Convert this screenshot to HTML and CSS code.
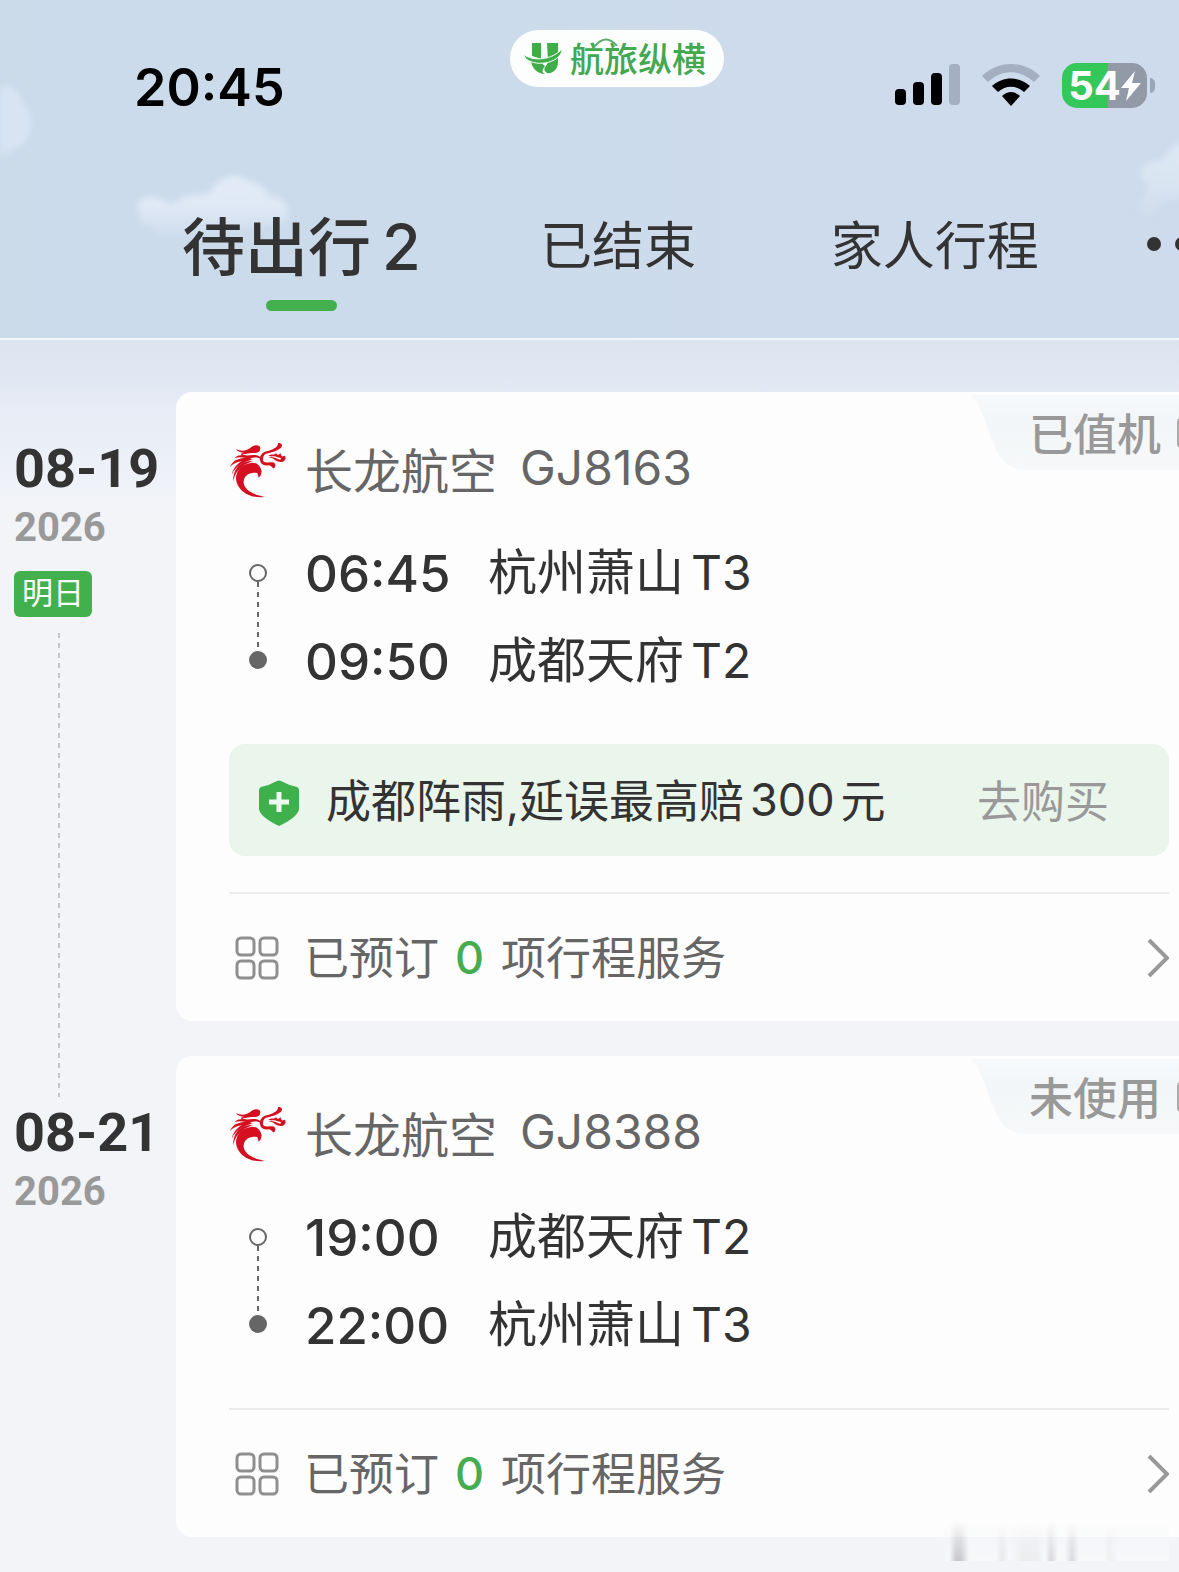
FILE: index.html
```html
<!DOCTYPE html>
<html lang="zh-CN">
<head>
<meta charset="utf-8">
<meta name="viewport" content="width=device-width, initial-scale=1">
<title>航旅纵横 行程</title>
<link rel="stylesheet" href="styles.css">
</head>
<body>
<svg class="sprite" width="0" height="0" aria-hidden="true">
  <symbol id="dragon" viewBox="28 36 172 168">
    <path d="M96 98C66 101 48 121 48 146C50 180 88 207 134 201C100 194 72 180 71 157C70 138 88 124 112 129L116 143C122 138 126 130 124 120C120 106 109 98 96 98Z"/>
    <path d="M98 93C67 92 38 112 40 154C44 129 59 108 98 93Z"/>
    <path d="M88 84C60 82 38 89 30 111C44 96 57 96 65 93C50 103 39 116 35 135C46 108 70 98 98 88Z"/>
    <path d="M47 58C67 65 78 62 91 54C103 42 122 44 121 56C119 69 108 69 96 69C83 69 78 73 66 73C76 78 88 76 98 75C111 75 123 78 122 88C117 80 100 82 92 84C79 87 63 77 45 84C50 76 60 76 66 76C59 73 65 68 73 68C62 68 53 65 47 58Z"/>
    <path d="M174 39C184 38 189 45 184 52C178 59 160 67 148 69C136 70 130 75 129 85C127 96 134 99 149 97C163 95 170 101 164 113C158 120 156 106 146 106C129 109 118 99 120 84C122 69 134 64 147 62C160 58 176 50 174 39Z"/>
    <path d="M145 76C155 72 162 76 169 69C170 77 177 75 181 69C184 76 184 80 190 79C196 72 200 86 193 92C184 101 169 94 161 87C156 83 150 84 145 82C153 80 158 81 164 83L176 88C182 91 185 86 181 83C172 82 166 77 158 79C153 80 149 79 145 76Z"/>
  </symbol>
  <symbol id="services" viewBox="0 0 44 44">
    <g fill="none" stroke="#8f8f8f" stroke-width="3"><rect x="2" y="2" width="17" height="17" rx="4"/><rect x="25" y="2" width="17" height="17" rx="4"/><rect x="2" y="25" width="17" height="17" rx="4"/><rect x="25" y="25" width="17" height="17" rx="4"/></g>
  </symbol>
  <symbol id="chevron" viewBox="0 0 22 38"><path d="M2 1L20 19L2 37" fill="none" stroke="#999" stroke-width="4"/></symbol>
  <symbol id="tag" viewBox="0 0 210 75" preserveAspectRatio="none">
    <path d="M1 0C9 5 12 15 21 40C29 61 36 75 58 75H210V0Z" fill="url(#tagfill)"/>
  </symbol>
  <linearGradient id="tagfill" x1="0" y1="0" x2="0" y2="1"><stop offset="0" stop-color="#f7f9fb"/><stop offset=".3" stop-color="#f3f6f8"/><stop offset="1" stop-color="#f6f8f9"/></linearGradient>
</svg>

<header class="header">
  <svg class="cloud cloud-edge" width="42" height="90" viewBox="0 0 42 90" aria-hidden="true"><path d="M0 8C12 5 21 14 23 26C32 32 34 44 29 54C26 70 12 72 0 78Z" fill="#d8e4f2"/></svg>
  <svg class="cloud cloud-main" width="170" height="80" viewBox="0 0 170 80" aria-hidden="true"><path d="M6 40C-2 26 12 20 22 24C32 24 30 32 42 29C49 17 65 23 75 19C82 7 98-4 112 6C126 9 132 16 136 23C152 22 158 36 151 48L110 55L55 60C39 72 20 62 20 52C8 53 3 47 6 40Z" fill="url(#cloudfill)"/><linearGradient id="cloudfill" x1="0" y1="0" x2="0" y2="1"><stop offset="0" stop-color="#e3ecf8"/><stop offset=".5" stop-color="#dfe8f5"/><stop offset="1" stop-color="#ccdbeb"/></linearGradient></svg>
  <svg class="cloud cloud-right" width="50" height="110" viewBox="0 0 50 110" aria-hidden="true"><path d="M50 12C36 14 33 26 25 31C10 30 0 43 9 50C18 54 10 66 5 73C-3 90 18 92 24 76C34 68 43 70 50 68Z" fill="url(#rightfill)"/><linearGradient id="rightfill" x1="0" y1="0" x2="0" y2="1"><stop offset="0" stop-color="#dde8f4"/><stop offset=".5" stop-color="#dae5f2"/><stop offset="1" stop-color="#cfdcec"/></linearGradient></svg>

  <div class="status">
    <time class="clock">20:45</time>
    <div class="brand">
      <svg width="40" height="34" viewBox="0 0 40 34" fill="#3fae49" aria-hidden="true"><path d="M9 1H18V17Q18 22 22 24Q17 30 22 32C14 32 8 25 8 18L19 17L9 14Z"/><path d="M24 1H35V20C35 27 30 32 24 31C18 27 24 24 25 20Z"/><path d="M0 12C10 20 29 18 39 7C39 20 15 26 3 17Z" stroke="#fcfefd" stroke-width="1"/></svg>
      <span class="brand-name">航旅纵横</span>
      <svg class="brand-arc" width="24" height="8" viewBox="0 0 24 8" aria-hidden="true"><path d="M1 8Q12-5 23 8" fill="none" stroke="#5aab6a" stroke-width="2"/></svg>
    </div>
    <div class="indicators">
      <svg width="65" height="42" viewBox="0 0 65 42" aria-label="信号"><rect y="25" width="11" height="16" rx="4"/><rect x="18" y="18" width="11" height="23" rx="4"/><rect x="36" y="9" width="11" height="32" rx="4"/><rect x="54" width="11" height="41" rx="4" fill="#a4b0c2"/></svg>
      <svg width="58" height="42" viewBox="0 0 58 42" aria-label="无线网络"><path d="M0 12C16-4 42-4 58 12L52 18C38 5 20 5 6 18Z" fill="#a4b0c2"/><path d="M10 22C21 12 37 12 48 22L42 28C34 21 24 21 16 28Z"/><path d="M20 32Q29 24 38 32L29 42Z"/></svg>
      <div class="battery"><span>54</span><svg width="20" height="30" viewBox="0 0 20 30" aria-hidden="true"><path d="M14 0L0 17H8L5 30L20 12H11Z" fill="#fff"/></svg></div>
    </div>
  </div>

  <nav class="tabs">
    <button class="tab active" type="button">待出行<span class="count">2</span></button>
    <button class="tab" type="button">已结束</button>
    <button class="tab" type="button">家人行程</button>
    <button class="more" type="button" aria-label="更多"><i></i><i></i><i></i></button>
  </nav>
</header>

<main class="trips">
  <section class="trip">
    <div class="date">
      <strong>08-19</strong><span class="year">2026</span><span class="badge">明日</span><span class="dash"></span>
    </div>
    <article class="card">
      <div class="state"><svg aria-hidden="true"><use href="#tag"/></svg><span>已值机</span><i></i></div>
      <h2 class="airline"><svg class="logo" aria-hidden="true"><use href="#dragon"/></svg><span>长龙航空</span><span class="flight">GJ8163</span></h2>
      <div class="route">
        <svg class="track" width="20" height="106" viewBox="0 0 20 106" aria-hidden="true"><circle cx="10" cy="9" r="8" fill="none" stroke="#666" stroke-width="2"/><path d="M10 18V88" stroke="#666" stroke-width="2" stroke-dasharray="5 5"/><circle cx="10" cy="96" r="9" fill="#666"/></svg>
        <div class="stop"><time>06:45</time><span>杭州萧山<b>T3</b></span></div>
        <div class="stop"><time>09:50</time><span>成都天府<b>T2</b></span></div>
      </div>
      <a class="insure" href="#insure"><svg width="40" height="46" viewBox="0 0 40 46" aria-hidden="true"><path d="M18 1Q20 0 22 1Q29 5 38 7Q40 8 40 10V29Q39 37 20 46Q1 37 0 29V10Q0 8 2 7Q11 5 18 1Z" fill="#3fb14c"/><path d="M20 12V32M10 22H30" stroke="#edf9ee" stroke-width="5"/></svg><span>成都阵雨,延误最高赔<b>300</b>元</span><span class="buy">去购买</span></a>
      <a class="services" href="#services-1"><svg class="grid-icon" aria-hidden="true"><use href="#services"/></svg><span>已预订<b>0</b>项行程服务</span><svg class="chevron" aria-hidden="true"><use href="#chevron"/></svg></a>
    </article>
  </section>

  <section class="trip">
    <div class="date"><strong>08-21</strong><span class="year">2026</span></div>
    <article class="card">
      <div class="state"><svg aria-hidden="true"><use href="#tag"/></svg><span>未使用</span><i></i></div>
      <h2 class="airline"><svg class="logo" aria-hidden="true"><use href="#dragon"/></svg><span>长龙航空</span><span class="flight">GJ8388</span></h2>
      <div class="route">
        <svg class="track" width="20" height="106" viewBox="0 0 20 106" aria-hidden="true"><circle cx="10" cy="9" r="8" fill="none" stroke="#666" stroke-width="2"/><path d="M10 18V88" stroke="#666" stroke-width="2" stroke-dasharray="5 5"/><circle cx="10" cy="96" r="9" fill="#666"/></svg>
        <div class="stop"><time>19:00</time><span>成都天府<b>T2</b></span></div>
        <div class="stop"><time>22:00</time><span>杭州萧山<b>T3</b></span></div>
      </div>
      <a class="services" href="#services-2"><svg class="grid-icon" aria-hidden="true"><use href="#services"/></svg><span>已预订<b>0</b>项行程服务</span><svg class="chevron" aria-hidden="true"><use href="#chevron"/></svg></a>
      <div class="smudge"></div>
    </article>
  </section>
</main>
</body>
</html>
```

FILE: styles.css
```css
* { box-sizing: border-box; }

body {
  margin: 0;
  overflow-x: hidden;
  background: #f2f4f8;
  color: #333;
  font-family: Inter, "Noto Sans CJK SC", sans-serif;
}

button { padding: 0; border: 0; background: none; color: inherit; font: inherit; }
a { color: inherit; text-decoration: none; }
svg { display: block; flex: none; }
.sprite { position: absolute; }

/* Header */
.header {
  position: relative;
  overflow: hidden;
  padding-top: 30px;
  border-bottom: 2px solid #f3f7fc;
  background: linear-gradient(90deg, #cbdbea, #cedbec);
}
.cloud { position: absolute; overflow: visible; filter: blur(3px); }
.cloud-edge { left: 0; top: 78px; }
.cloud-main { left: 134px; top: 174px; }
.cloud-right { right: -6px; top: 130px; }

.status {
  position: relative;
  display: flex;
  height: 116px;
  padding: 0 24px 0 134px;
}
.clock { width: 376px; padding-top: 25px; color: #000; font-size: 52px; font-weight: 600; line-height: 66px; }
.brand {
  position: relative;
  display: flex;
  align-items: center;
  gap: 7px;
  width: 214px;
  height: 57px;
  padding-left: 13px;
  border-radius: 29px;
  background: #fcfefe;
}
.brand-name { padding-top: 2px; color: #43a850; font-size: 34px; font-weight: 500; line-height: 50px; white-space: nowrap; }
.brand-arc { position: absolute; left: 84px; top: 8px; }
.indicators { display: flex; gap: 22px; margin-left: auto; padding-top: 34px; }
.battery {
  position: relative;
  display: flex;
  align-items: center;
  justify-content: center;
  width: 85px;
  height: 45px;
  margin-right: 8px;
  margin-top: -1px;
  border-radius: 15px;
  background: linear-gradient(90deg, #34c759 54%, #9299a7 54%);
  color: #fff;
  font-size: 40px;
  font-weight: 700;
}
.battery::after {
  content: "";
  position: absolute;
  right: -8px;
  top: 15px;
  width: 5px;
  height: 15px;
  border-radius: 0 5px 5px 0;
  background: #9aa5b5;
}

.tabs { position: relative; display: flex; height: 192px; padding-left: 143px; }
.tab { position: relative; flex: 1; height: 202px; font-size: 52px; line-height: 76px; white-space: nowrap; }
.tab.active { font-size: 63px; font-weight: 500; }
.tab.active::after {
  content: "";
  position: absolute;
  left: calc(50% - 35px);
  top: 154px;
  width: 71px;
  height: 11px;
  border-radius: 6px;
  background: #42b04d;
}
.count { margin-left: 11px; }
.more { display: flex; align-items: center; gap: 14px; width: 86px; height: 196px; padding-left: 54px; }
.more i { flex: none; width: 14px; height: 14px; border-radius: 50%; background: #333; }

/* Trip list */
.trips {
  display: flex;
  flex-direction: column;
  gap: 35px;
  padding: 52px 0 35px;
  background: linear-gradient(#dce4f0, #e7ecf6 70px, #f2f4f8 170px);
}
.trip { display: grid; grid-template-columns: 176px minmax(0, 1fr); }

.date { display: flex; flex-direction: column; align-items: flex-start; padding: 44px 0 0 14px; font-family: Roboto, "Noto Sans CJK SC", sans-serif; }
.date strong { font-size: 54px; line-height: 66px; }
.year { color: #999; font-size: 40px; font-weight: 700; line-height: 52px; }
.badge { margin-top: 17px; padding: 0 8px; border-radius: 6px; background: #43b04e; color: #fff; font-size: 31px; line-height: 46px; }
.dash {
  flex: 1;
  width: 2px;
  margin: 16px 0 -76px 44px;
  background: repeating-linear-gradient(#c3c5c9 0 5px, transparent 5px 10px);
}

.card { position: relative; padding: 50px 10px 0 53px; border-radius: 16px 0 0 16px; background: #fdfdfd; }
.state { position: absolute; right: 0; top: 3px; width: 210px; height: 75px; overflow: hidden; color: #999; font-size: 44px; font-weight: 500; line-height: 80px; }
.state svg { position: absolute; width: 210px; height: 75px; }
.state span { position: absolute; left: 60px; }
.state i { position: absolute; left: 208px; top: 23px; width: 28px; height: 30px; border: 3px solid #aaa; border-radius: 4px; }

.airline { display: flex; align-items: center; height: 56px; margin: 0; color: #666; font-size: 48px; font-weight: 400; white-space: nowrap; }
.airline span { padding-bottom: 5px; }
.airline .flight { margin-left: 23px; }
.logo { width: 58px; height: 56px; margin-right: 18px; fill: #d50f20; }

.route { position: relative; padding: 31px 0 39px 76px; }
.track { position: absolute; left: 19px; top: 66px; }
.stop { display: flex; align-items: center; height: 88px; font-size: 49px; white-space: nowrap; }
.stop time { width: 183px; font-size: 51px; font-weight: 500; }
.stop span { padding-bottom: 10px; }
.stop b { margin-left: 7px; font-size: 48px; font-weight: 400; }

.insure {
  display: flex;
  align-items: center;
  height: 112px;
  margin-bottom: 36px;
  padding: 0 60px 0 30px;
  border-radius: 16px;
  background: #eaf5ec;
  font-size: 45px;
  white-space: nowrap;
}
.insure svg { margin: 6px 27px 0 0; }
.insure span { padding-bottom: 3px; }
.insure b { margin: 0 6px; font-weight: 400; vertical-align: 2px; }
.insure .buy { margin-left: auto; color: #999; font-size: 44px; }

.services { display: flex; align-items: center; height: 129px; border-top: 2px solid #ececee; color: #666; font-size: 45px; white-space: nowrap; }
.services span { padding-bottom: 4px; }
.services b { margin: 0 17px 0 16px; color: #45ad50; font-weight: 500; vertical-align: 1px; }
.grid-icon { width: 44px; height: 44px; margin: 0 25px 0 6px; }
.chevron { width: 22px; height: 38px; margin-left: auto; }

/* Faded streaks over the lower corner of the last card */
.smudge {
  position: absolute;
  right: 10px;
  bottom: -24px;
  width: 230px;
  height: 40px;
  background: linear-gradient(90deg, transparent 10px, #c8c8cb 17px, #c8c8cb 22px, transparent 30px 57px, #e9e9eb 63px, transparent 70px, #ecedef 84px, #ecedef 98px, transparent 106px, #d8d8dc 112px, transparent 119px 126px, #d8d8dc 133px, transparent 140px 165px, #eeeff1 170px, transparent 180px), linear-gradient(90deg, transparent, #f7f8fa 12px);
  -webkit-mask-image: linear-gradient(transparent, #000);
  mask-image: linear-gradient(transparent, #000);
}
```
